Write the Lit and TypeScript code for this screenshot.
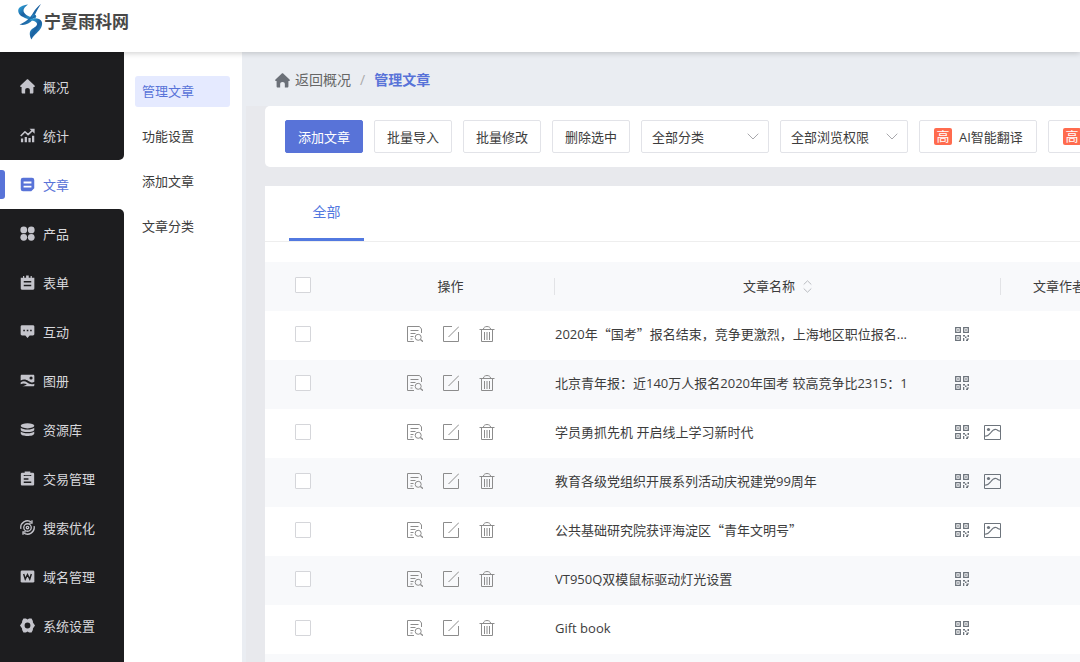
import { LitElement, html, css, svg, nothing, TemplateResult, SVGTemplateResult } from "lit";
import { customElement, property, state } from "lit/decorators.js";
import { classMap } from "lit/directives/class-map.js";

const ICONS: Record<string, SVGTemplateResult> = {
  home: svg`<path fill="currentColor" d="M8 .3c.4 0 .7.2 1 .4l6.500 6.200c.7.7.4 1.500-.5 1.500h-.7v5.800c0 .8-.4 1.300-1.200 1.300h-2.600v-3.500c0-1.500-.9-2.400-2.500-2.400s-2.500.9-2.500 2.400v3.500H2.900c-.8 0-1.200-.5-1.200-1.300V8.400H1c-.9 0-1.200-.8-.5-1.500L7 .7c.3-.2.600-.4 1-.4z"/>`,
  stats: svg`<g fill="none" stroke="currentColor"><path stroke-width="1.700" stroke-linejoin="round" d="M.8 8.600 5.300 4l3.300 3 5-4.800"/><path fill="currentColor" stroke="none" d="M10.200.8H15.600v5.300z"/><path stroke-width="2.400" d="M2.200 11.300V15.200M6.200 9.600v5.600M10.200 10.600v4.600M14 8.200v7"/></g>`,
  article: svg`<path fill="currentColor" fill-rule="evenodd" d="M3.200.8h9.600a2.400 2.400 0 0 1 2.400 2.400v8.800L12 15.200H3.200A2.400 2.400 0 0 1 .8 12.800V3.200A2.400 2.400 0 0 1 3.200.8zm.6 4.100v1.900h8.400V4.900zm0 4.300v1.900h8.400V9.200z"/>`,
  product: svg`<g fill="currentColor"><circle cx="4" cy="4.200" r="3.600"/><circle cx="12" cy="4.200" r="3.600"/><circle cx="4" cy="12" r="3.600"/><circle cx="12" cy="12" r="3.600"/></g>`,
  form: svg`<path fill="currentColor" fill-rule="evenodd" d="M.8 2.800h2.400V1h1.300v1.800h2V.5h2.800v2.300h2V1h1.300v1.800h2.700v11.400c0 .8-.5 1.400-1.300 1.400H2c-.8 0-1.200-.6-1.200-1.400zM4 6.500V8h8V6.500zm0 4V12h8v-1.500z"/>`,
  chat: svg`<path fill="currentColor" fill-rule="evenodd" d="M2.200 1.200h11.600c.9 0 1.500.6 1.500 1.500v8c0 .9-.6 1.500-1.500 1.500h-3.500L8 15l-2.300-2.800H2.200c-.9 0-1.500-.6-1.500-1.500v-8c0-.9.6-1.500 1.500-1.500zM3.500 6v1.600h1.700V6zm3.700 0v1.600h1.700V6zm3.600 0v1.600h1.700V6z"/>`,
  album: svg`<path fill="currentColor" fill-rule="evenodd" d="M2 1.800h12c.8 0 1.300.5 1.300 1.300v6.300c-2.300 1.400-4.200.3-6.300-1C6.500 6.800 3.800 6.100.7 8V3.100c0-.8.5-1.300 1.300-1.300zm9.800 1.800a1.700 1.700 0 1 0 0 3.400 1.700 1.700 0 0 0 0-3.400zM.7 10.200c2.600-2 4.800-1.500 7 0 2.400 1.700 5 2.500 7.600 1.200v1.500c0 .8-.5 1.300-1.300 1.300H2.300c2.300-.2 3.700-1 5-2.100C5 10.800 2.700 10.800.7 12z"/>`,
  database: svg`<g fill="currentColor"><ellipse cx="8" cy="4" rx="7.200" ry="2.800"/><path d="M.8 6.200C3 8.700 13 8.700 15.200 6.200v2c0 3.400-14.400 3.400-14.400 0z"/><path d="M.8 10.200c2.200 2.500 12.200 2.500 14.400 0v2c0 3.600-14.400 3.600-14.400 0z"/></g>`,
  trade: svg`<path fill="currentColor" fill-rule="evenodd" d="M5 .5h6v1.400h2.600c1 0 1.500.6 1.500 1.500v10.600c0 .9-.6 1.500-1.500 1.500H2.400c-.9 0-1.500-.6-1.500-1.500V3.400c0-.9.5-1.500 1.500-1.500H5zM4 4.200v1.100h8V4.200h-1.200v.2H5.200v-.2zm0 3.600v1.500h5V7.800zm0 3.500v1.500h8v-1.500z"/>`,
  seo: svg`<g fill="none" stroke="currentColor" stroke-width="1.400"><path d="M1 9.500A7.100 7.100 0 0 1 12.300 2.400M15 6.500A7.100 7.100 0 0 1 3.700 13.600"/><circle cx="8" cy="8" r="4"/><circle cx="8" cy="8" r="1.300"/><path d="M12.800.2v3.200H9.800M3.200 15.800v-3.200h3"/></g>`,
  domain: svg`<rect x=".7" y="1.500" width="14.600" height="13" rx="1.500" fill="currentColor"/><path d="m3.900 5.300 1.700 5.400L8 6l2.400 4.700 1.700-5.400" fill="none" stroke="#1d1d1f" stroke-width="1.500"/>`,
  gear: svg`<path fill="currentColor" fill-rule="evenodd" d="M3.700.6h2.600L8 1.500 9.700.6h2.600l1.400 2.700.1 1.500L16 8l-2.200 3.200-.1 1.500-1.400 2.700H9.700L8 14.500l-1.700.9H3.700l-1.400-2.700-.1-1.500L0 8l2.200-3.200.1-1.500zM8 4.900a3.100 3.100 0 1 0 0 6.200 3.100 3.100 0 0 0 0-6.200z"/>`,
  preview: svg`<g fill="none" stroke="currentColor"><path d="M7 15.500H.5V.5h12l2 2.500V7M3.500 4.500h8M3.500 7.500h5M3.500 10.500h3M3.500 13h2"/><circle cx="11.200" cy="11.300" r="3"/><path stroke-width="1.300" d="m13.400 13.500 2.600 2.200"/></g>`,
  edit: svg`<path fill="none" stroke="currentColor" d="M9 .5H.5v15h15V6M5.500 11 16 .5"/>`,
  trash: svg`<path fill="none" stroke="currentColor" d="M.5 3.500h15M4.500 3c0-3.300 7-3.300 7 0M2.500 4v11.500h11V4M5.500 6v8M8 6v8M10.500 6v8"/>`,
  qr: svg`<g fill="none" stroke="currentColor" stroke-width="1.300"><path d="M1.700 1.700h4.600v4.600H1.700zM9.700 1.700h4.600v4.600H9.700zM1.700 9.700h4.600v4.600H1.700z"/></g><path fill="currentColor" d="M3.300 3.300h1.400v1.400H3.300zM11.300 3.300h1.400v1.400h-1.400zM3.300 11.300h1.400v1.400H3.300zM9 9h2v1.500H9zM13.500 9H15v2h-1.500zM11 10.500h1.500V12H11zM9 12h1.300v3H9zM12.500 12.500H15v1h-1v1.500h-2v-1h.5z"/>`,
};

@customElement("ui-icon")
class UiIcon extends LitElement {
  @property() name = "";
  static styles = css`
    :host { display: block; width: 15px; height: 15px; flex: none; }
    svg { display: block; width: 100%; height: 100%; }
  `;
  render() {
    return html`<svg viewBox="0 0 16 16" aria-hidden="true">${ICONS[this.name]}</svg>`;
  }
}

const quote = (t: string): TemplateResult => html`<span class="cjk">${t}</span>`;

interface Article { title: TemplateResult | string; picture?: boolean; }

const ARTICLES: Article[] = [
  { title: html`2020年${quote("“")}国考${quote("”")}报名结束，竞争更激烈，上海地区职位报名...` },
  { title: "北京青年报：近140万人报名2020年国考 较高竞争比2315：1" },
  { title: "学员勇抓先机 开启线上学习新时代", picture: true },
  { title: "教育各级党组织开展系列活动庆祝建党99周年", picture: true },
  { title: html`公共基础研究院获评海淀区${quote("“")}青年文明号${quote("”")}`, picture: true },
  { title: "VT950Q双模鼠标驱动灯光设置" },
  { title: "Gift book" },
];

const NAV_TOP = [["home", "概况"], ["stats", "统计"]];
const NAV_REST = [
  ["product", "产品"], ["form", "表单"], ["chat", "互动"], ["album", "图册"],
  ["database", "资源库"], ["trade", "交易管理"], ["seo", "搜索优化"],
  ["domain", "域名管理"], ["gear", "系统设置"],
];
const SUBNAV = ["管理文章", "功能设置", "添加文章", "文章分类"];

@customElement("app-root")
class AppRoot extends LitElement {
  @state() private selected = new Set<number>();

  static styles = css`
    :host {
      display: flex;
      flex-direction: column;
      height: 100vh;
      overflow: hidden;
      background: #e8e9ed;
      color: #3c3c3c;
      font: 13px/20px "Open Sans", "Noto Sans CJK SC", sans-serif;
    }
    * { box-sizing: border-box; }
    a { color: inherit; text-decoration: none; }
    button, select { font: inherit; color: inherit; margin: 0; }
    .cjk { font-family: "Noto Sans CJK SC", sans-serif; }

    .top {
      flex: none;
      height: 52px;
      display: flex;
      align-items: flex-start;
      padding: 3px 16px;
      background: #fff;
      box-shadow: 0 1px 6px rgba(0, 0, 0, 0.2);
      z-index: 1;
    }
    .brand { display: flex; align-items: center; gap: 1px; font-size: 17px; line-height: 36px; font-weight: 700; color: #484848; }
    .brand svg { width: 27px; height: 38px; }

    .body { flex: 1; min-height: 0; display: flex; }
    .side { flex: none; width: 124px; display: flex; flex-direction: column; background: #fff; color: #d8d8dc; }
    .group { background: #1d1d1f; }
    .first { padding-top: 10px; border-radius: 0 0 5px 0; }
    .rest { flex: 1; border-radius: 0 5px 0 0; }
    .item { display: flex; align-items: center; gap: 8px; height: 49px; padding-left: 20px; }
    .item ui-icon { color: #c4c4cb; }
    .current { padding-left: 0; color: #5873d8; }
    .current::before { content: ""; width: 5px; height: 29px; margin-right: 7px; border-radius: 0 3px 3px 0; background: #5873d8; }
    .current ui-icon { color: #5873d8; }

    .sub { flex: none; width: 118px; padding: 24px 12px 0 11px; display: flex; flex-direction: column; gap: 14px; background: #fff; }
    .sub a { padding: 0 7px; line-height: 31px; border-radius: 3px; }
    .sub .on { background: #e5eaff; color: #5873d8; }

    main { flex: 1; min-width: 0; display: flex; flex-direction: column; border-left: 4px solid #eaedf2; }
    .crumbs { flex: none; height: 54px; display: flex; align-items: center; padding: 2px 0 0 29px; background: #eaedf2; font-size: 14px; color: #666; }
    .crumbs a { display: flex; align-items: center; gap: 5px; }
    .crumbs ui-icon { color: #6b7078; }
    .crumbs .sep { padding: 0 9px; color: #aaa; }
    .crumbs b { color: #5873d8; }

    .panel { margin-left: 19px; background: #fff; overflow: hidden; flex: none; }
    .tools { display: flex; gap: 11px; padding: 14px 20px; border-radius: 5px 0 0 5px; margin-bottom: 19px; }
    .btn { flex: none; width: 78px; height: 33px; padding: 0; border: 1px solid #e2e3e8; border-radius: 2px; background: #fff; white-space: nowrap; }
    .primary { background: #5873d8; border-color: #5873d8; color: #fff; }
    .pro { width: 118px; display: flex; align-items: center; gap: 7px; padding-left: 14px; }
    .tag { flex: none; width: 18px; height: 17px; line-height: 17px; border-radius: 2px; background: #ff6b4e; color: #fff; }
    .pick { flex: none; width: 128px; display: grid; align-items: center; }
    .pick > * { grid-area: 1 / 1; }
    .pick select { appearance: none; width: 100%; height: 33px; padding: 0 30px 0 10px; border: 1px solid #e2e3e8; border-radius: 2px; background: #fff; }
    .pick svg { justify-self: end; width: 12px; height: 7px; margin-right: 10px; pointer-events: none; }

    .list { flex: 1; display: flex; flex-direction: column; }
    .tabs { flex: none; height: 56px; padding-left: 24px; border-bottom: 1px solid #eee; margin-bottom: 20px; }
    .tab { width: 75px; height: 55px; padding: 0; border: 0; border-bottom: 3px solid #5279e0; background: none; font-size: 14px; color: #5279e0; }

    table { flex: none; width: 100%; min-width: 852px; table-layout: fixed; border-collapse: collapse; }
    .c-check { width: 82px; }
    .c-ops { width: 208px; }
    .c-name { width: 446px; }
    tr { height: 49px; }
    th, td { padding: 0; font-weight: 400; text-align: left; }
    td { padding-bottom: 3px; }
    thead tr, tbody tr:nth-child(even) { background: #f8f9fb; }
    .check { padding: 0 0 3px 30px; }
    input { appearance: none; display: block; width: 16px; height: 16px; margin: 0; border: 1px solid #d5d6da; border-radius: 1px; background: #fff; }
    input:checked { background: #5873d8; border-color: #5873d8; }
    .head { display: flex; align-items: center; justify-content: center; gap: 8px; line-height: 17px; border-right: 1px solid #e2e3e6; }
    .head svg { width: 9px; height: 13px; }
    .last { border: 0; }
    .ops { display: flex; align-items: center; justify-content: center; gap: 20px; color: #8c8c8c; }
    .ops button, .marks button { padding: 0; border: 0; background: none; color: inherit; }
    .ops ui-icon { width: 16px; height: 16px; }
    .name { display: flex; align-items: center; gap: 11px; }
    .name a { flex: none; width: 388px; white-space: nowrap; overflow: hidden; text-overflow: ellipsis; }
    .marks { flex: none; display: flex; align-items: center; gap: 14px; color: #6d747c; }
    .marks ui-icon { width: 16px; height: 16px; }
    .marks svg { display: block; width: 17px; height: 15px; }
    .foot { flex: 1; background: #f8f9fb; }
  `;

  private toggle(i: number) {
    const next = new Set(this.selected);
    next.has(i) ? next.delete(i) : next.add(i);
    this.selected = next;
  }

  private toggleAll() {
    this.selected = this.selected.size === ARTICLES.length ? new Set() : new Set(ARTICLES.map((_, i) => i));
  }

  private navItem([icon, label]: string[], current = false) {
    return html`<a href="#" class=${classMap({ item: true, current })}><ui-icon name=${icon}></ui-icon>${label}</a>`;
  }

  private pick(label: string, text: string) {
    return html`<div class="pick">
      <select aria-label=${label}><option>${text}</option></select>
      <svg viewBox="0 0 12 7" aria-hidden="true"><path d="M.7.7 6 6 11.300.7" fill="none" stroke="#a8a8ac"/></svg>
    </div>`;
  }

  private row(a: Article, i: number) {
    return html`<tr>
      <td class="check"><input type="checkbox" aria-label="选择" .checked=${this.selected.has(i)} @change=${() => this.toggle(i)} /></td>
      <td><div class="ops">
        <button aria-label="预览"><ui-icon name="preview"></ui-icon></button>
        <button aria-label="编辑"><ui-icon name="edit"></ui-icon></button>
        <button aria-label="删除"><ui-icon name="trash"></ui-icon></button>
      </div></td>
      <td><div class="name">
        <a href="#">${a.title}</a>
        <div class="marks">
          <button aria-label="二维码"><ui-icon name="qr"></ui-icon></button>
          ${a.picture
            ? html`<svg viewBox="0 0 17 15" aria-hidden="true"><g fill="none" stroke="currentColor"><path d="M.5.5h16v14H.5z"/><path stroke-width="1.200" d="M1 11c3 .5 4-1 5.500-3S10 4 12 4.500s2.500 2 4.500 1.500"/></g><circle cx="4.500" cy="4.500" r="1.600" fill="currentColor"/></svg>`
            : nothing}
        </div>
      </div></td>
      <td></td>
    </tr>`;
  }

  render() {
    return html`
      <header class="top">
        <a class="brand" href="#">
          <svg viewBox="0 0 27 38" aria-hidden="true">
            <defs><linearGradient id="ink" x1="0" y1="0" x2="1" y2="1"><stop offset="0" stop-color="#35b2e6"/><stop offset=".5" stop-color="#1a5f9f"/><stop offset="1" stop-color="#35a9dc"/></linearGradient></defs>
            <g fill="url(#ink)">
              <path d="M12 1.500C7 2 2 4 2.200 8c.3 4.500 5 6.500 11 8.500l4-1.500C11.500 13 8 11 7.500 8c-.3-2.500 2-4.500 4.500-6.500z"/>
              <path d="M25 1c-3.500 2.500-6 5.500-8 9-2.500 4.500-7 9-13.500 11.500 5 1.200 10-.5 13-4.500 1.800-3.500 4-9.500 8.500-16z"/>
              <path d="M13.500 17c3-2 7-2 9.500-1 3.500 1.500 3.800 5 2.200 8.500-2 4.500-7 6.500-9.700 12-1.800-3.500-2.500-7-.5-9.500 2-2.200 5.500-3 6-5.500.4-2.500-3-3.800-7.500-4.500z"/>
              <circle cx="18.200" cy="13.500" r="2"/>
            </g>
          </svg>
          宁夏雨科网
        </a>
      </header>
      <div class="body">
        <nav class="side">
          <div class="group first">${NAV_TOP.map((n) => this.navItem(n))}</div>
          ${this.navItem(["article", "文章"], true)}
          <div class="group rest">${NAV_REST.map((n) => this.navItem(n))}</div>
        </nav>
        <nav class="sub">${SUBNAV.map((s, i) => html`<a href="#" class=${classMap({ on: i === 0 })}>${s}</a>`)}</nav>
        <main>
          <div class="crumbs">
            <a href="#"><ui-icon name="home"></ui-icon>返回概况</a><span class="sep">/</span><b>管理文章</b>
          </div>
          <section class="panel tools">
            <button class="btn primary">添加文章</button>
            <button class="btn">批量导入</button>
            <button class="btn">批量修改</button>
            <button class="btn">删除选中</button>
            ${this.pick("分类", "全部分类")}
            ${this.pick("浏览权限", "全部浏览权限")}
            <button class="btn pro"><span class="tag">高</span>AI智能翻译</button>
            <button class="btn pro"><span class="tag">高</span></button>
          </section>
          <section class="panel list">
            <div class="tabs"><button class="tab">全部</button></div>
            <table>
              <colgroup><col class="c-check" /><col class="c-ops" /><col class="c-name" /><col /></colgroup>
              <thead><tr>
                <th class="check"><input type="checkbox" aria-label="全选" .checked=${this.selected.size === ARTICLES.length} @change=${this.toggleAll} /></th>
                <th><div class="head">操作</div></th>
                <th><div class="head">文章名称<svg viewBox="0 0 9 13" aria-hidden="true"><path d="M.7 4.500 4.500.8l3.800 3.700M.7 8.500l3.800 3.700 3.800-3.700" fill="none" stroke="#b9bbc0"/></svg></div></th>
                <th><div class="head last">文章作者</div></th>
              </tr></thead>
              <tbody>${ARTICLES.map((a, i) => this.row(a, i))}</tbody>
            </table>
            <div class="foot"></div>
          </section>
        </main>
      </div>
    `;
  }
}
